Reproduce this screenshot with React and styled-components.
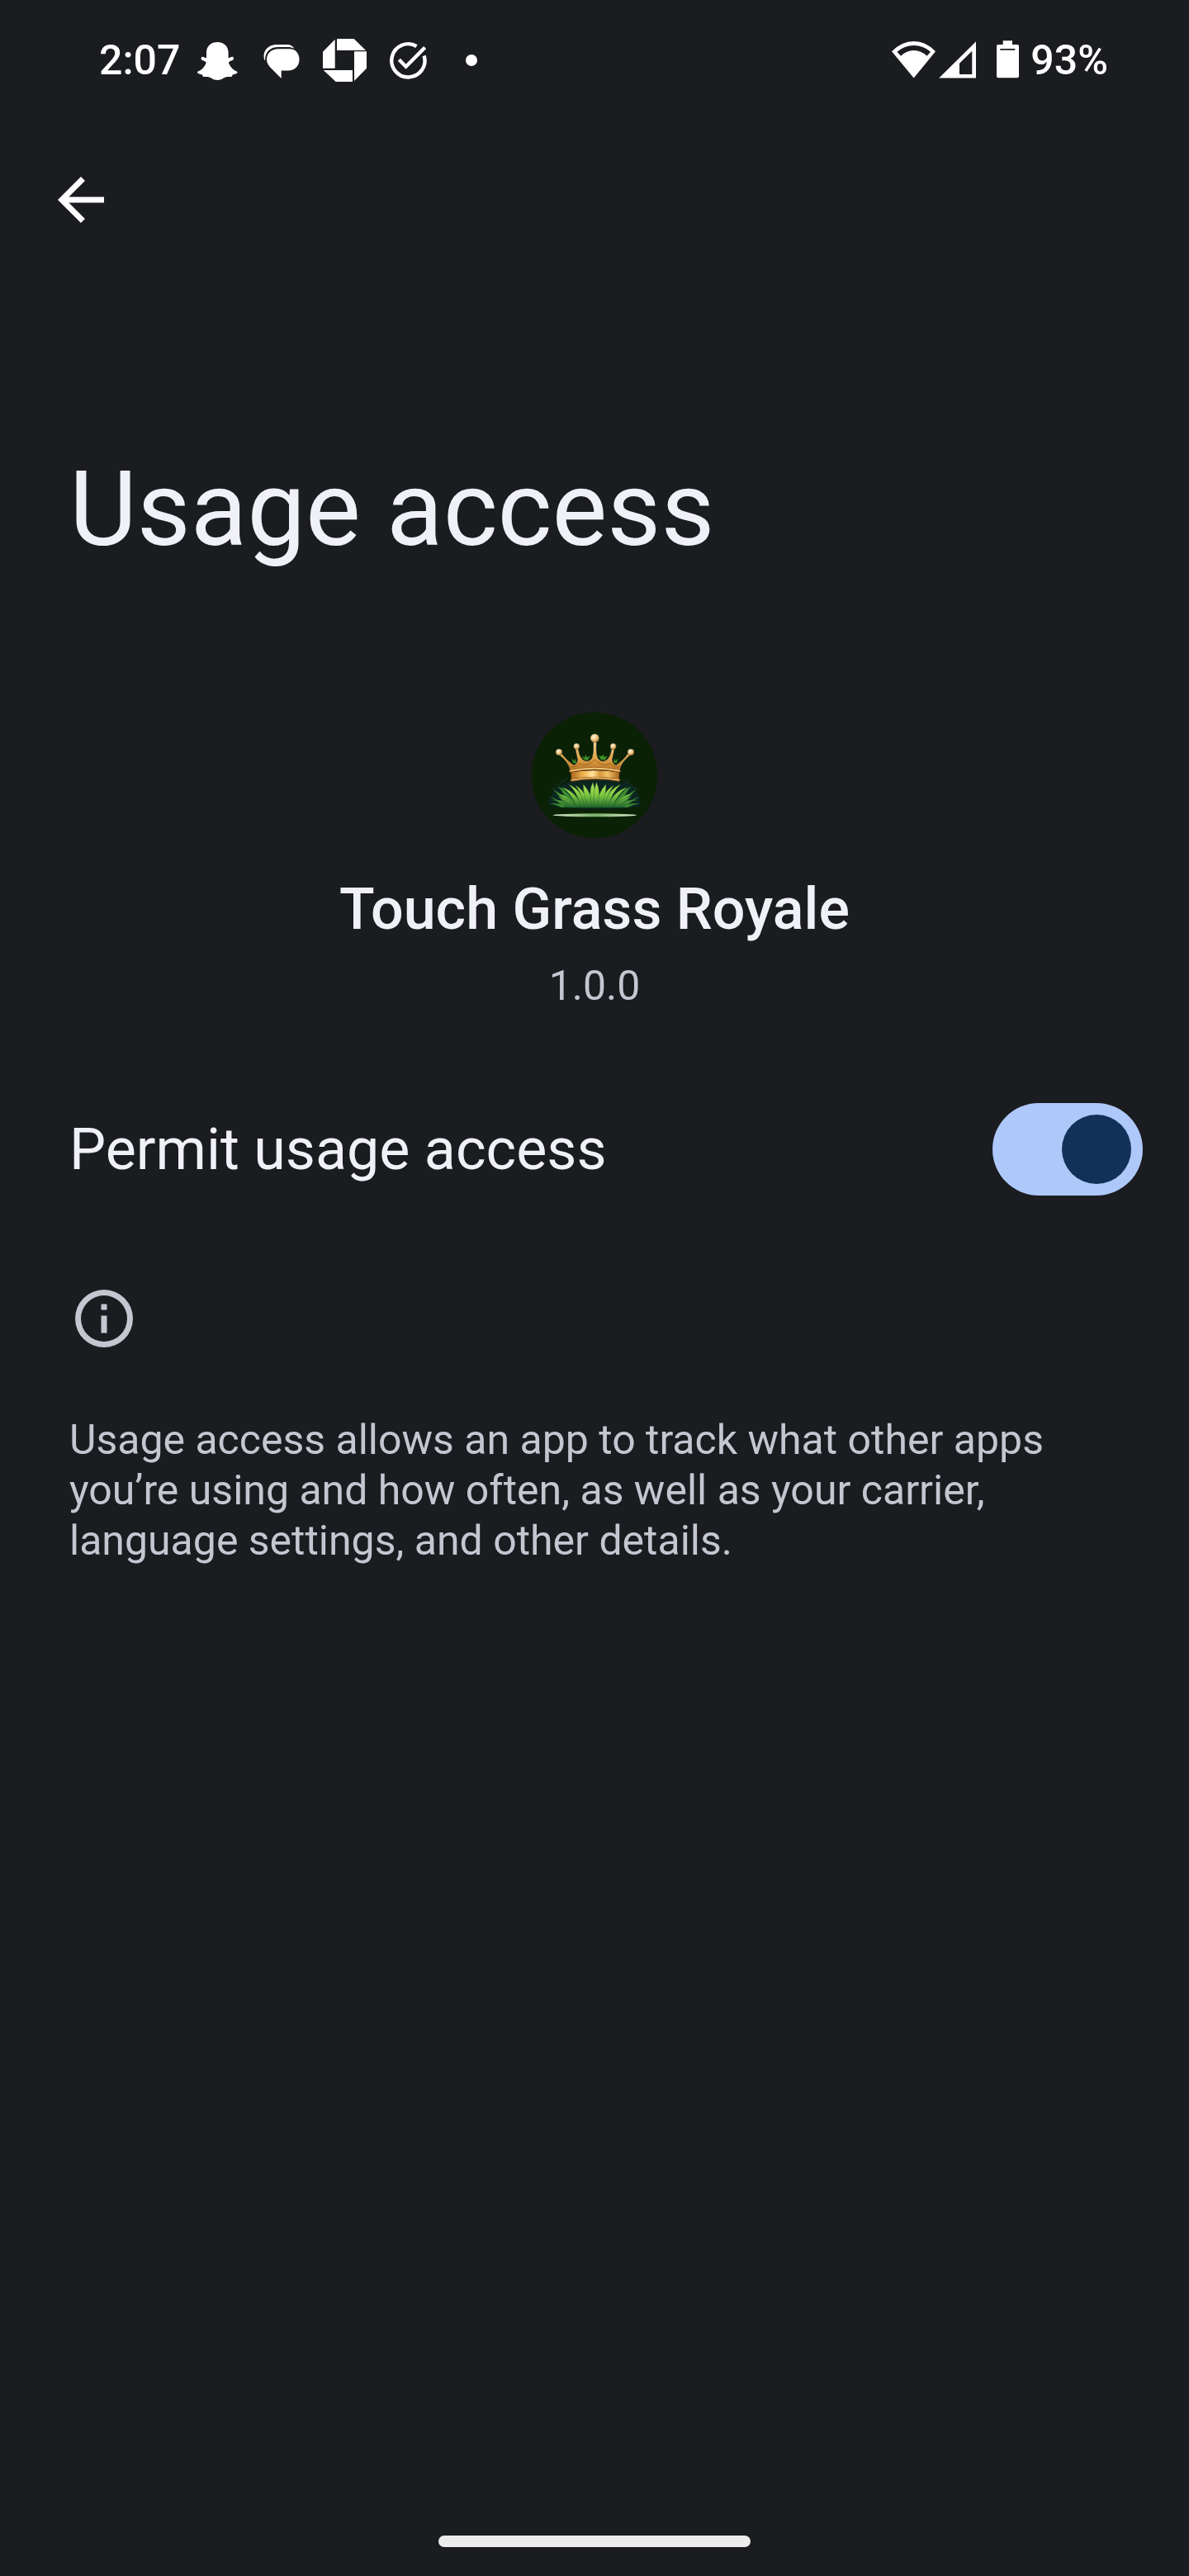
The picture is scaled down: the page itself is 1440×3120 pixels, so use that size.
import React, { useState } from "react";
import styled, { createGlobalStyle } from "styled-components";

const colors = {
  background: "#1b1c20",
  text: "#f0f0f7",
  muted: "#c5c6d0",
  track: "#adc8f9",
  thumb: "#113158",
};

const GlobalStyle = createGlobalStyle`
  *, *::before, *::after { box-sizing: border-box; }
  body {
    margin: 0;
    background: ${colors.background};
    color: ${colors.text};
    font-family: Roboto, "Liberation Sans", sans-serif;
  }
`;

const Screen = styled.div`
  display: flex;
  flex-direction: column;
  min-height: 100vh;
`;

const StatusBar = styled.header`
  display: flex;
  align-items: center;
  justify-content: space-between;
  height: 146px;
  padding: 0 98px 0 120px;
  color: #fff;
  font-size: 50px;
  font-weight: 500;
  line-height: 61px;
`;

const StatusGroup = styled.div`
  display: flex;
  align-items: center;
`;

const Clock = styled.time`
  min-width: 105px;
`;

const BatteryLevel = styled.span`
  min-width: 108px;
  text-align: right;
`;

const Glyph = styled.svg`
  display: block;
  flex: none;
  width: ${(p) => p.$width}px;
  height: ${(p) => p.$height || 60}px;
  margin-right: ${(p) => p.$gap || 0}px;
  fill: currentColor;
`;

const AppBar = styled.nav`
  display: flex;
  padding: 54px 56px 0;
`;

const BackButton = styled.button`
  padding: 0;
  border: 0;
  background: none;
  color: #fff;
  cursor: pointer;
`;

const Content = styled.main`
  display: flex;
  flex: 1;
  flex-direction: column;
  padding: 253px 56px 0 84px;
`;

const Title = styled.h1`
  margin: 0 0 165px;
  font-size: 126px;
  font-weight: 400;
  line-height: 160px;
`;

const AppSummary = styled.section`
  display: flex;
  flex-direction: column;
  align-items: center;
  margin: 0 28px 111px 0;
`;

const AppIcon = styled.svg`
  display: block;
  width: 154px;
  height: 154px;
  margin-bottom: 44px;
`;

const AppName = styled.h2`
  margin: 0 0 22px;
  font-size: 70px;
  font-weight: 500;
  line-height: 82px;
`;

const Version = styled.p`
  margin: 0;
  color: ${colors.muted};
  font-size: 50px;
  line-height: 61px;
`;

const SettingRow = styled.label`
  display: flex;
  align-items: center;
  justify-content: space-between;
  margin-bottom: 107px;
  font-size: 70px;
  line-height: 82px;
  cursor: pointer;
`;

const Switch = styled.input`
  display: flex;
  flex: none;
  align-items: center;
  justify-content: ${(p) => (p.checked ? "flex-end" : "flex-start")};
  appearance: none;
  width: 182px;
  height: 112px;
  margin: 0;
  padding: 14px;
  border-radius: 56px;
  background: ${(p) => (p.checked ? colors.track : "#45474f")};
  cursor: pointer;

  &::before {
    content: "";
    width: 84px;
    height: 84px;
    border-radius: 50%;
    background: ${(p) => (p.checked ? colors.thumb : "#8f9099")};
  }
`;

const Footnote = styled.section`
  display: flex;
  flex-direction: column;
  gap: 75px;
  padding-right: 28px;
  color: ${colors.muted};
`;

const FootnoteText = styled.p`
  margin: 0;
  font-size: 50px;
  line-height: 61px;
`;

const GestureArea = styled.footer`
  display: flex;
  justify-content: center;
  padding-bottom: 35px;
`;

const GestureHandle = styled.div`
  width: 378px;
  height: 14px;
  border-radius: 7px;
  background: #ececec;
`;

function GhostIcon() {
  return (
    <Glyph $width={77} viewBox="0 0 77 60" aria-hidden="true">
      <path d="M38.3 8C30 8 25 13.5 25 21v6.2c-2 0-3.500-1.700-5-1.400-2 .6-1.800 3-.2 4 2 1.200 5.200 1.500 4.700 4C22.500 38.500 19 42.200 14 43.900c0 2.200 3 2.900 6 3.600.4 2 1 2.700 2.700 2.600 3.500-.5 5.600-.2 8.400 1.700 4.200 3 10.200 3 14.400 0 2.800-1.900 4.900-2.200 8.400-1.700 1.700.1 2.300-.6 2.700-2.600 3-.7 6-1.400 6-3.600-5-1.700-8.500-5.400-10.500-10.100-.5-2.500 2.700-2.800 4.700-4 1.600-1 1.800-3.400-.2-4-1.500-.3-3 1.400-5 1.400V21C51.600 13.500 46.600 8 38.300 8Z" />
    </Glyph>
  );
}

function MessagesIcon() {
  return (
    <Glyph $width={77} viewBox="0 0 77 60" aria-hidden="true">
      <path d="M18.500 30C15 20 22 11 33 11h12c5 0 8 2 9.500 5-2.500-1.500-5-2-8-2H35C25 14 19 20 19 30Z" />
      <path d="M35 16.300h14c7 0 11.500 5.500 11.500 12.700 0 7.800-5.500 13.500-13.500 13.500h-8.300V52L25 38.200c-2.500-2.700-4-5.800-4-9.200 0-7.700 6-12.700 14-12.700Z" />
    </Glyph>
  );
}

function OctagonIcon() {
  return (
    <Glyph $width={77} viewBox="0 0 77 60" aria-hidden="true">
      <path d="M29 4h20.700L64 18H29ZM50 19.300h15v20.400L50 55ZM12.700 42H48v14H27.700ZM26.700 4.700v35H12v-20Z" />
    </Glyph>
  );
}

function TaskIcon() {
  return (
    <Glyph $width={77} viewBox="0 0 77 60" aria-hidden="true">
      <g fill="none" stroke="currentColor" strokeWidth="4.400">
        <path d="M57.600 24.500A20.100 20.100 0 1 1 48.500 13" />
        <path d="m27.300 29.300 8.300 8.400 23-23.200" />
      </g>
    </Glyph>
  );
}

function DotIcon() {
  return (
    <Glyph $width={77} viewBox="0 0 77 60" aria-hidden="true">
      <circle cx="38" cy="30" r="7" />
    </Glyph>
  );
}

function WifiIcon() {
  return (
    <Glyph $width={60} viewBox="0 0 60 60" role="img" aria-label="Wi-Fi">
      <path
        fillRule="evenodd"
        d="M29.700 51.500 3 19.300Q15 7 29.700 7T56 19.300ZM9.500 19.700l4.500 5.100Q21 18 29.700 18t16 6.800l4.300-5.100Q41 12 29.700 12T9.500 19.700Z"
      />
    </Glyph>
  );
}

function SignalIcon() {
  return (
    <Glyph $width={47} $gap={23} viewBox="0 0 47 60" role="img" aria-label="Mobile signal">
      <path fillRule="evenodd" d="M.3 51.600H45V7.300ZM25 33.700l15.300-15V47H25Z" />
    </Glyph>
  );
}

function BatteryIcon() {
  return (
    <Glyph $width={27} viewBox="0 0 27 60" role="img" aria-label="Battery">
      <path
        fillRule="evenodd"
        d="M7.700 6.300H19V11h6q2 0 2 2v36.300q0 2-2 2H2q-2 0-2-2V13q0-2 2-2h5.700ZM4.300 16v1.800h18V16Z"
      />
    </Glyph>
  );
}

function BackIcon() {
  return (
    <Glyph $width={84} $height={84} viewBox="0 0 24 24" aria-hidden="true">
      <path d="M20 11H7.830l5.590-5.590L12 4l-8 8 8 8 1.410-1.410L7.830 13H20v-2Z" />
    </Glyph>
  );
}

function InfoIcon() {
  return (
    <Glyph $width={84} $height={84} viewBox="0 0 24 24" aria-hidden="true">
      <path d="M11 7h2v2h-2V7Zm0 4h2v6h-2v-6Zm1-9a10 10 0 1 0 0 20 10 10 0 0 0 0-20Zm0 18a8 8 0 1 1 0-16 8 8 0 0 1 0 16Z" />
    </Glyph>
  );
}

const backBlades = [
  "M155 384Q130 355 108 346Q135 352 168 384Z",
  "M165 384Q140 335 118 320Q160 338 190 384Z",
  "M150 385Q128 372 108 372Q135 365 168 385Z",
  "M180 384Q160 330 136 308Q178 325 205 384Z",
];

const frontBlades = [
  "M190 385Q165 350 132 334Q180 340 212 385Z",
  "M205 385Q185 330 150 312Q200 322 228 385Z",
  "M222 385Q205 325 176 302Q222 318 243 385Z",
  "M236 385Q222 330 200 304Q240 325 255 385Z",
  "M248 385Q228 335 229 300Q262 335 265 385Z",
  "M262 385Q245 330 264 293Q277 330 272 385Z",
  "M165 385Q145 360 116 358Q155 352 190 385Z",
  "M185 385Q165 360 138 346Q180 348 206 385Z",
];

function CrownIcon() {
  return (
    <AppIcon viewBox="39 37 462 462" role="img" aria-label="Touch Grass Royale icon">
      <defs>
        <linearGradient id="gold" x1="0" y1="0" x2="0" y2="1">
          <stop offset="0" stopColor="#f6d58c" />
          <stop offset="0.500" stopColor="#e6ac4c" />
          <stop offset="1" stopColor="#b87427" />
        </linearGradient>
        <linearGradient id="band" x1="0" y1="0" x2="1" y2="0">
          <stop offset="0" stopColor="#a9641e" />
          <stop offset="0.250" stopColor="#efb24d" />
          <stop offset="0.450" stopColor="#ffe39a" />
          <stop offset="0.600" stopColor="#d8983b" />
          <stop offset="0.750" stopColor="#f3c468" />
          <stop offset="1" stopColor="#a9641e" />
        </linearGradient>
        <radialGradient id="pearl" cx="0.400" cy="0.350" r="0.700">
          <stop offset="0" stopColor="#fff6dc" />
          <stop offset="0.500" stopColor="#efc987" />
          <stop offset="1" stopColor="#b9772e" />
        </radialGradient>
        <linearGradient id="blade" gradientUnits="userSpaceOnUse" x1="0" y1="295" x2="0" y2="388">
          <stop offset="0" stopColor="#b4e458" />
          <stop offset="0.500" stopColor="#7cc640" />
          <stop offset="1" stopColor="#1b5f2c" />
        </linearGradient>
        <linearGradient id="ground" x1="0" y1="0" x2="1" y2="0">
          <stop offset="0" stopColor="#d5e8c8" />
          <stop offset="0.500" stopColor="#79ad69" />
          <stop offset="1" stopColor="#d5e8c8" />
        </linearGradient>
        <g id="halfGrass">
          <g fill="#3b8c30">
            {backBlades.map((d) => <path key={d} d={d} />)}
          </g>
          <g fill="url(#blade)" stroke="#174f26" strokeWidth="1">
            {frontBlades.map((d) => <path key={d} d={d} />)}
          </g>
        </g>
      </defs>
      <circle cx="270" cy="268" r="229" fill="#0b2105" />
      <path
        fill="#0b2520"
        d="M104 374Q98 355 114 342Q122 310 154 302Q175 290 185 292L182 285H362L360 292Q395 294 406 309Q428 322 430 345Q444 356 434 378Q420 390 270 390T104 374Z"
      />
      <g fill="none" stroke="#143029" strokeWidth="3">
        <path d="m130 305 30-14M145 292l28-10M410 305l-30-14M396 292l-28-10M432 318l-24-8M108 320l20-6" />
      </g>
      <use href="#halfGrass" />
      <use href="#halfGrass" transform="translate(541 0) scale(-1 1)" />
      <path d="M120 382Q270 392 425 382Q270 396 120 382Z" fill="#12342c" />
      <ellipse cx="271" cy="413" rx="152" ry="6" fill="url(#ground)" />
      <g fill="#3d9128">
        <path d="m192 222-5-16 10 10 3-9 4 18ZM234 212l-12-14 12 6 4-10 5 9 12-5-10 16ZM292 210l-6-14 10 4 5-8 5 10 11-4-9 15ZM340 222l2-15 5 9 8-10-4 18Z" />
      </g>
      <path
        fill="url(#gold)"
        stroke="#0d2b35"
        strokeWidth="2"
        d="M181 250Q174 216 136 191L146 183Q170 214 194 230Q207 228 208 210L199 167H211Q213 198 228 211Q245 223 259 208Q268 190 265 146H278Q274 190 284 208Q298 223 315 211Q330 198 332 167H344L335 210Q336 228 349 230Q374 214 396 183L406 191Q369 216 362 250Q271 235 181 250Z"
      />
      <path
        d="M181 238Q205 240 214 225Q238 238 262 219Q271 205 280 219Q304 238 328 225Q338 240 362 238"
        fill="none"
        stroke="#a8671f"
        strokeWidth="3"
      />
      <path d="M184 257Q271 245 360 257L359 281Q271 268 186 281Z" fill="url(#band)" />
      <g fill="none" strokeLinecap="round">
        <path d="M182 253Q271 235 361 253" stroke="#8a4f17" strokeWidth="10" />
        <path d="M183 252Q271 234 360 252" stroke="#f5cf80" strokeWidth="5" />
        <path d="M187 286Q271 271 359 286" stroke="#85501d" strokeWidth="10" />
        <path d="M188 285Q271 270 358 285" stroke="#edbd69" strokeWidth="5" />
      </g>
      <g fill="url(#pearl)" stroke="#0d2b35" strokeWidth="1">
        <circle cx="141" cy="184" r="12" />
        <circle cx="205" cy="163" r="11" />
        <circle cx="271" cy="133" r="16" />
        <circle cx="338" cy="163" r="11" />
        <circle cx="402" cy="184" r="12" />
      </g>
    </AppIcon>
  );
}

export default function App() {
  const [permitted, setPermitted] = useState(true);

  return (
    <Screen>
      <GlobalStyle />
      <StatusBar>
        <StatusGroup>
          <Clock>2:07</Clock>
          <GhostIcon />
          <MessagesIcon />
          <OctagonIcon />
          <TaskIcon />
          <DotIcon />
        </StatusGroup>
        <StatusGroup>
          <WifiIcon />
          <SignalIcon />
          <BatteryIcon />
          <BatteryLevel>93%</BatteryLevel>
        </StatusGroup>
      </StatusBar>
      <AppBar>
        <BackButton type="button" aria-label="Navigate up">
          <BackIcon />
        </BackButton>
      </AppBar>
      <Content>
        <Title>Usage access</Title>
        <AppSummary>
          <CrownIcon />
          <AppName>Touch Grass Royale</AppName>
          <Version>1.0.0</Version>
        </AppSummary>
        <SettingRow htmlFor="permit-usage">
          Permit usage access
          <Switch
            id="permit-usage"
            type="checkbox"
            role="switch"
            checked={permitted}
            onChange={(event) => setPermitted(event.target.checked)}
          />
        </SettingRow>
        <Footnote>
          <InfoIcon />
          <FootnoteText>
            Usage access allows an app to track what other apps you’re using and how often, as well
            as your carrier, language settings, and other details.
          </FootnoteText>
        </Footnote>
      </Content>
      <GestureArea>
        <GestureHandle />
      </GestureArea>
    </Screen>
  );
}
